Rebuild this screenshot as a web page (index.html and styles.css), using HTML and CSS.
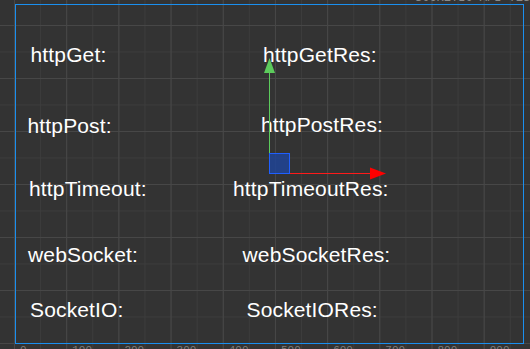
FILE: index.html
```html
<!DOCTYPE html>
<html lang="en">
<head>
  <meta charset="UTF-8">
  <title>Scene</title>
  <link rel="stylesheet" href="styles.css">
</head>
<body>

  <div class="scene">
    <div class="scene-title">SOCKETIO API TEST 960x640</div>

    <!-- design resolution frame -->
    <div class="frame"></div>

    <!-- nodes -->
    <div class="node n-get">httpGet:</div>
    <div class="node n-get-res">httpGetRes:</div>
    <div class="node n-post">httpPost:</div>
    <div class="node n-post-res">httpPostRes:</div>
    <div class="node n-timeout">httpTimeout:</div>
    <div class="node n-timeout-res">httpTimeoutRes:</div>
    <div class="node n-ws">webSocket:</div>
    <div class="node n-ws-res">webSocketRes:</div>
    <div class="node n-sio">SocketIO:</div>
    <div class="node n-sio-res">SocketIORes:</div>

    <!-- move gizmo -->
    <svg class="gizmo" width="130" height="130" viewBox="0 0 130 130">
      <line x1="9.5" y1="18" x2="9.5" y2="98" stroke="#5ccb5c" stroke-width="1"/>
      <polygon points="9.5,3 4,18 15,18" fill="#5ccb5c"/>
      <line x1="30" y1="118.5" x2="112" y2="118.5" stroke="#ff1a1a" stroke-width="1"/>
      <polygon points="110,112.5 126,118.5 110,124.5" fill="#ff0000"/>
      <rect x="9.5" y="98.5" width="20" height="20" fill="rgba(32,68,150,0.85)" stroke="#1f5fff" stroke-width="1"/>
    </svg>

    <div class="ruler">
      <span>0</span><span>100</span><span>200</span><span>300</span><span>400</span>
      <span>500</span><span>600</span><span>700</span><span>800</span><span>900</span>
    </div>
  </div>

</body>
</html>
```

FILE: styles.css
```css
body {
  margin: 0;
  overflow: hidden;
  background-color: #333;
}

.scene {
  position: relative;
  width: 530px;
  height: 349px;
  overflow: hidden;
  background-color: #333;
  background-image:
    linear-gradient(to right, #474747 1px, transparent 1px),
    linear-gradient(to bottom, #474747 1px, transparent 1px),
    linear-gradient(to right, #3c3c3c 1px, transparent 1px),
    linear-gradient(to bottom, #3c3c3c 1px, transparent 1px);
  background-size: 52.2px 100%, 100% 53px, 26.1px 100%, 100% 26.5px;
  background-position: 14px 0, 0 25px, 14px 0, 0 25px;
  font-family: 'Liberation Sans', Arial, sans-serif;
}

.scene-title {
  position: absolute;
  top: -9px;
  left: 415px;
  font-family: 'Liberation Mono', monospace;
  font-size: 12px;
  color: #8a8a8a;
  white-space: nowrap;
}

.frame {
  position: absolute;
  left: 15px;
  top: 4px;
  width: 507px;
  height: 338px;
  border: 1px solid #1a8fef;
}

.node {
  position: absolute;
  font-size: 21px;
  line-height: 21px;
  letter-spacing: 0.15px;
  color: #fff;
  white-space: nowrap;
}

.n-get { left: 30.5px; top: 44px; }
.n-get-res { left: 263px; top: 44px; }
.n-post { left: 27.5px; top: 115px; }
.n-post-res { left: 261px; top: 114px; }
.n-timeout { left: 29px; top: 178px; }
.n-timeout-res { left: 233px; top: 178px; }
.n-ws { left: 28px; top: 244px; }
.n-ws-res { left: 242.5px; top: 244px; }
.n-sio { left: 30px; top: 299px; }
.n-sio-res { left: 246.5px; top: 299px; }

.gizmo {
  position: absolute;
  left: 260px;
  top: 55px;
}

.ruler {
  position: absolute;
  left: 0;
  top: 344px;
  display: flex;
  padding-left: 20px;
  font-family: 'Liberation Mono', monospace;
  font-size: 11px;
  color: #7c7c7c;
}

.ruler span {
  width: 52.2px;
  flex: none;
}
```
